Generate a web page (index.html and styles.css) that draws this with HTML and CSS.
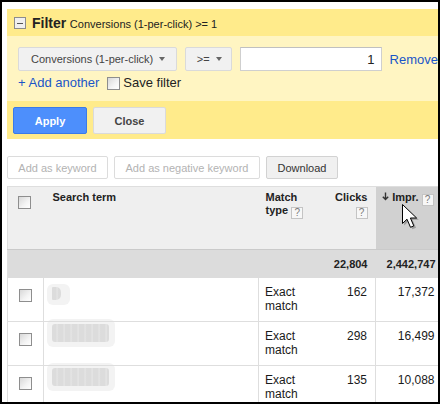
FILE: index.html
```html
<!DOCTYPE html>
<html>
<head>
<meta charset="utf-8">
<link rel="stylesheet" href="styles.css">
</head>
<body>
<div class="frame">
  <div class="filter">
    <div class="fhead">
      <span class="minus"><span class="minus-bar"></span></span>
      <span class="ftitle"><b>Filter</b> <span class="fsum">Conversions (1-per-click) &gt;= 1</span></span>
    </div>
    <div class="fbody">
      <div class="frow">
        <div class="dd dd-metric"><span class="dd-text">Conversions (1-per-click)</span><span class="caret"></span></div>
        <div class="dd dd-op"><span class="dd-text">&gt;=</span><span class="caret"></span></div>
        <div class="val">1</div>
        <a class="link remove">Remove</a>
      </div>
      <div class="frow2">
        <a class="link">+ Add another</a>
        <span class="cb cb-save"></span>
        <span class="save-label">Save filter</span>
      </div>
    </div>
    <div class="fbtns">
      <button class="btn btn-apply">Apply</button>
      <button class="btn btn-close">Close</button>
    </div>
  </div>

  <div class="actions">
    <button class="abtn abtn-kw" disabled>Add as keyword</button>
    <button class="abtn abtn-neg" disabled>Add as negative keyword</button>
    <button class="abtn abtn-dl">Download</button>
  </div>

  <table class="grid">
    <colgroup>
      <col class="c-cb"><col class="c-st"><col class="c-mt"><col class="c-cl"><col class="c-im">
    </colgroup>
    <thead>
      <tr class="hrow">
        <th class="h-cb"><span class="cb"></span></th>
        <th class="h-st">Search term</th>
        <th class="h-mt">Match<br>type <span class="help">?</span></th>
        <th class="h-num">Clicks<br><span class="help help-clicks">?</span></th>
        <th class="h-num h-sorted"><svg class="sort-arrow" width="7" height="9" viewBox="0 0 7 9"><path d="M3.5 0.5V7.5M0.8 4.8L3.5 7.6L6.2 4.8" fill="none" stroke="#333" stroke-width="1.4"/></svg>Impr. <span class="help">?</span></th>
      </tr>
      <tr class="sum">
        <td></td><td></td><td></td>
        <td class="s-num">22,804</td>
        <td class="s-num s-im">2,442,747</td>
      </tr>
    </thead>
    <tbody>
      <tr class="drow">
        <td class="d-cb"><span class="cb"></span></td>
        <td class="d-st"><div class="blob blob-short"><div class="blob-in"></div></div></td>
        <td class="d-mt">Exact<br>match</td>
        <td class="d-cl">162</td>
        <td class="d-im">17,372</td>
      </tr>
      <tr class="drow">
        <td class="d-cb"><span class="cb"></span></td>
        <td class="d-st"><div class="blob blob-long"><div class="blob-in"></div></div></td>
        <td class="d-mt">Exact<br>match</td>
        <td class="d-cl">298</td>
        <td class="d-im">16,499</td>
      </tr>
      <tr class="drow">
        <td class="d-cb"><span class="cb"></span></td>
        <td class="d-st"><div class="blob blob-long"><div class="blob-in"></div></div></td>
        <td class="d-mt">Exact<br>match</td>
        <td class="d-cl">135</td>
        <td class="d-im">10,088</td>
      </tr>
    </tbody>
  </table>

  <svg class="cursor" width="18" height="28" viewBox="0 0 18 28">
    <path d="M2.2 2.2L2.2 21.5L6.9 17L10.4 25.3L14 23.8L10.5 15.8L16.8 15.8Z" fill="#000" opacity="0.25"/>
    <path d="M0.5 0.5L0.5 19.5L5 15.2L8.5 23.3L11.8 21.9L8.4 14L14.6 14Z" fill="#fff" stroke="#000" stroke-width="1" stroke-linejoin="round"/>
  </svg>
</div>
</body>
</html>
```

FILE: styles.css
```css
html, body {
  margin: 0;
  padding: 0;
  background: #fff;
}

.frame {
  position: relative;
  width: 440px;
  height: 404px;
  box-sizing: border-box;
  border: 2px solid #000;
  padding: 7px 0 0 5px;
  overflow: hidden;
  background: #fff;
  font-family: "Liberation Sans", Arial, sans-serif;
  color: #222;
}

/* ---------- filter panel ---------- */
.filter {
  width: 431px;
}

.fhead {
  height: 27px;
  box-sizing: border-box;
  background: #ffeb8b;
  display: flex;
  align-items: center;
  padding: 1px 0 0 7px;
}

.minus {
  width: 10px;
  height: 10px;
  border: 1px solid #8c8c8c;
  background: #efefef;
  display: flex;
  align-items: center;
  justify-content: center;
  margin-right: 6px;
}

.minus-bar {
  width: 6px;
  height: 1px;
  background: #555;
}

.ftitle {
  font-size: 13px;
  color: #222;
  white-space: nowrap;
}

.ftitle b {
  font-weight: bold;
  font-size: 14px;
}

.fsum {
  font-size: 11px;
  margin-left: 0;
}

.fbody {
  background: #fff5c2;
  padding: 11px 0 11px 11px;
}

.frow {
  display: flex;
  align-items: center;
  height: 24px;
  gap: 8px;
}

.dd {
  height: 24px;
  box-sizing: border-box;
  border: 1px solid #dadada;
  border-radius: 2px;
  background: #f1f1f1;
  font-size: 11px;
  color: #444;
  display: flex;
  align-items: center;
}

.dd-metric {
  width: 159px;
  padding-left: 12px;
}

.dd-op {
  width: 47px;
  padding-left: 11px;
}

.caret {
  width: 0;
  height: 0;
  border-left: 3px solid transparent;
  border-right: 3px solid transparent;
  border-top: 4px solid #666;
  margin-left: 6px;
}

.val {
  width: 142px;
  height: 24px;
  box-sizing: border-box;
  background: #fff;
  border: 1px solid #cfcfcf;
  border-top-color: #c0c0c0;
  font-size: 13px;
  color: #222;
  text-align: right;
  padding: 4px 6px 0 0;
}

.link {
  color: #1a55c8;
  font-size: 13px;
  text-decoration: none;
  white-space: nowrap;
}

.frow2 {
  display: flex;
  align-items: center;
  height: 15px;
  margin-top: 4px;
  font-size: 13px;
}

.cb {
  display: inline-block;
  width: 11px;
  height: 11px;
  border: 1px solid #8e8e8e;
  background: linear-gradient(135deg, #d8d8d8 0%, #f4f4f4 60%, #ffffff 100%);
}

.cb-save {
  margin-left: 8px;
  margin-top: 1px;
}

.save-label {
  margin-left: 3px;
  color: #222;
}

.fbtns {
  background: #ffeb8b;
  padding: 6px 0 5px 6px;
  display: flex;
  gap: 6px;
}

.btn {
  height: 27px;
  box-sizing: border-box;
  border-radius: 2px;
  font-family: "Liberation Sans", Arial, sans-serif;
  font-size: 11px;
  font-weight: bold;
  padding: 0;
}

.btn-apply {
  width: 74px;
  background: #4d8ffc;
  border: 1px solid #3a7ae8;
  color: #fff;
}

.btn-close {
  width: 73px;
  background: #f1f1f1;
  border: 1px solid #dadada;
  color: #444;
}

/* ---------- action buttons ---------- */
.actions {
  display: flex;
  gap: 6px;
  margin-top: 17px;
  height: 23px;
}

.abtn {
  height: 23px;
  box-sizing: border-box;
  border: 1px solid #dcdcdc;
  border-radius: 2px;
  background: #fff;
  font-family: "Liberation Sans", Arial, sans-serif;
  font-size: 11px;
  color: #b3b3b3;
  padding: 0;
}

.abtn-kw { width: 101px; }
.abtn-neg { width: 146px; }

.abtn-dl {
  width: 72px;
  background: #f0f0f0;
  border-color: #d2d2d2;
  color: #333;
}

/* ---------- table ---------- */
.grid {
  margin-top: 7px;
  width: 431px;
  table-layout: fixed;
  border-collapse: collapse;
  border-top: 1px solid #dedede;
  border-left: 1px solid #dedede;
}

.c-cb { width: 36px; }
.c-st { width: 215px; }
.c-mt { width: 62px; }
.c-cl { width: 55px; }
.c-im { width: 63px; }

.hrow th {
  height: 63px;
  box-sizing: border-box;
  background: #efefef;
  vertical-align: top;
  text-align: left;
  font-size: 11px;
  font-weight: bold;
  line-height: 13px;
  color: #222;
  padding: 4px 0 0 0;
}

.hrow .h-cb {
  padding: 9px 0 0 10px;
}

.hrow .h-cb .cb {
  display: block;
}

.hrow .h-st {
  padding-left: 9px;
}

.hrow .h-mt {
  padding-left: 7px;
}

.hrow .h-num {
  text-align: right;
  padding-right: 8px;
}

.hrow .h-sorted {
  background: #d1d1d1;
  padding-right: 5px;
  white-space: nowrap;
}

.sort-arrow {
  margin-right: 3px;
  vertical-align: 0;
}

.help {
  display: inline-block;
  width: 12px;
  height: 12px;
  box-sizing: border-box;
  border: 1px solid #c4c4c4;
  background: #f7f7f7;
  color: #7a7a7a;
  font-size: 10px;
  font-weight: normal;
  line-height: 10px;
  text-align: center;
  vertical-align: -2px;
}

.help-clicks {
  margin-top: 1px;
}

.sum td {
  height: 28px;
  box-sizing: border-box;
  background: #dcdcdc;
  border-top: 1px solid #cacaca;
  padding: 0;
  font-size: 11px;
  font-weight: bold;
  color: #222;
  vertical-align: middle;
}

.sum .s-num {
  text-align: right;
  padding-right: 8px;
}

.sum .s-im {
  padding-right: 3px;
  white-space: nowrap;
}

.drow td {
  height: 44px;
  box-sizing: border-box;
  border-bottom: 1px solid #dedede;
  vertical-align: top;
  font-size: 12px;
  line-height: 14px;
  color: #1a1a1a;
  padding: 7px 0 0 0;
}

.drow .d-cb {
  padding: 11px 0 0 11px;
}

.drow .d-cb .cb {
  display: block;
}

.drow .d-st {
  border-left: 1px solid #dedede;
  padding: 0 0 0 3px;
}

.drow .d-mt {
  border-left: 1px solid #dedede;
  padding-left: 6px;
}

.drow .d-cl {
  text-align: right;
  padding-right: 8px;
}

.drow .d-im {
  border-left: 1px solid #dedede;
  text-align: right;
  padding-right: 4px;
}

/* redacted search terms */
.blob {
  background: #f3f3f3;
  border-radius: 6px;
  box-sizing: border-box;
}

.blob-short {
  width: 23px;
  height: 21px;
  margin-top: 6px;
  padding: 3px 0 0 5px;
}

.blob-short .blob-in {
  width: 9px;
  height: 13px;
  border-radius: 1px 5px 5px 1px;
}

.blob-long {
  width: 68px;
  height: 28px;
  margin-top: -3px;
  padding: 5px 0 0 5px;
}

.blob-long .blob-in {
  width: 57px;
  height: 18px;
  border-radius: 3px;
}

.blob-in {
  background: repeating-linear-gradient(90deg, #dcdcdc 0px, #dcdcdc 4px, #e6e6e6 5px, #d9d9d9 7px);
  filter: blur(0.6px);
}

.cursor {
  position: absolute;
  left: 400px;
  top: 202px;
}
```
